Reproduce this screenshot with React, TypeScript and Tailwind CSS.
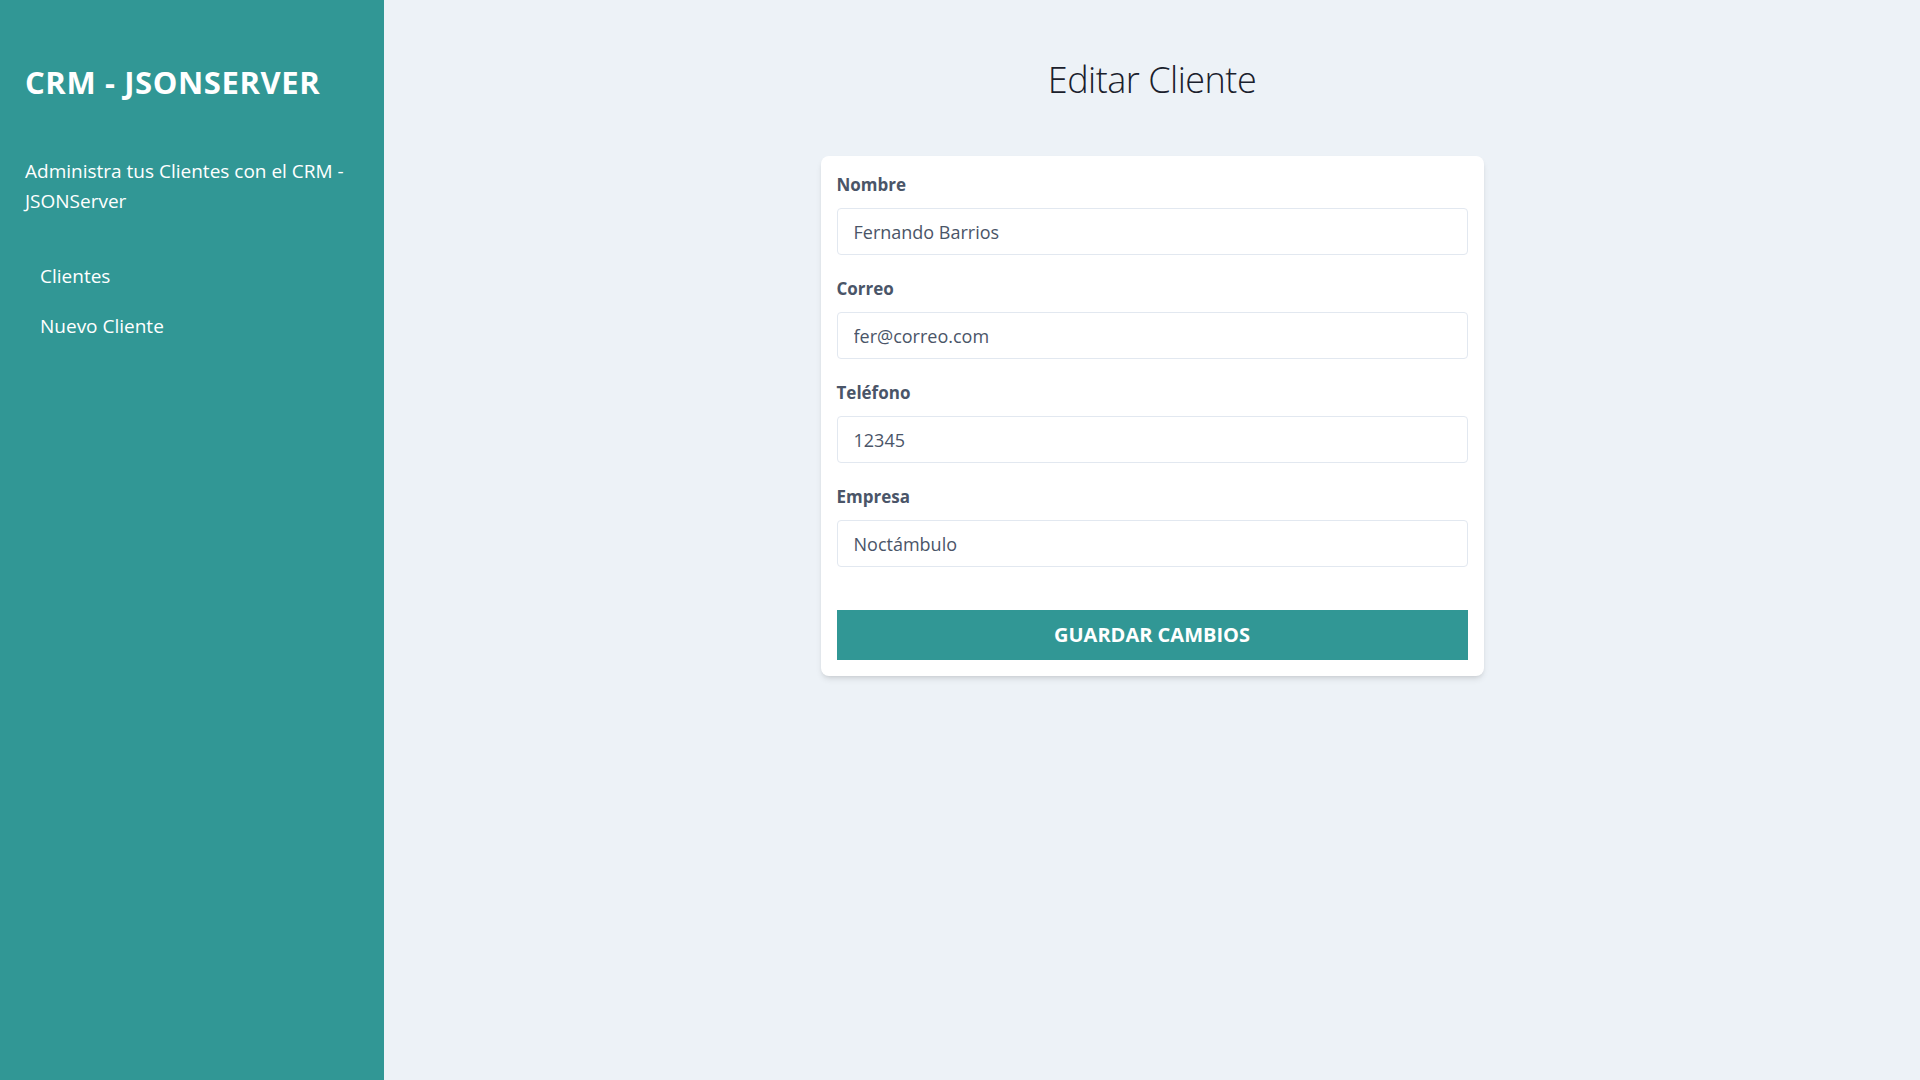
import React from "react";

const fields = [
  { label: "Nombre", value: "Fernando Barrios" },
  { label: "Correo", value: "fer@correo.com" },
  { label: "Teléfono", value: "12345" },
  { label: "Empresa", value: "Noctámbulo" },
];

export default function App() {
  return (
    <div className="flex min-h-screen h-[1080px] font-['Open_Sans',sans-serif]">
      <aside className="w-96 shrink-0 bg-[#319795] px-[25px] pt-[63px] text-white">
        <h2 className="text-[31px] leading-[38px] font-bold tracking-[0.6px]">CRM - JSONSERVER</h2>
        <p className="mt-[55px] text-[19px] leading-[30px]">
          Administra tus Clientes con el CRM - JSONServer
        </p>
        <nav className="mt-[45px] px-[15px] flex flex-col gap-[20px]">
          <a className="block text-[19px] leading-[30px]" href="#">Clientes</a>
          <a className="block text-[19px] leading-[30px]" href="#">Nuevo Cliente</a>
        </nav>
      </aside>
      <main className="flex-1 bg-[#edf2f7] pt-[56px]">
        <h1 className="text-center text-[36px] leading-[48px] font-light tracking-[-0.5px] text-[#1a202c]">Editar Cliente</h1>
        <div className="mx-auto mt-[52px] w-[663px] rounded-lg bg-white px-4 pt-[15px] pb-4 shadow-md">
          {fields.map((f) => (
            <div key={f.label} className="mb-[20px]">
              <label className="block text-[17px] leading-[27px] font-bold text-[#4a5568]">{f.label}</label>
              <input
                readOnly
                value={f.value}
                className="mt-[10px] block h-[47px] w-full rounded border border-[#e2e8f0] bg-white px-4 text-[18px] text-[#4a5568] outline-none"
              />
            </div>
          ))}
          <button className="mt-[43px] block h-[50px] w-full bg-[#319795] text-[20px] font-bold uppercase text-white">
            Guardar Cambios
          </button>
        </div>
      </main>
    </div>
  );
}
